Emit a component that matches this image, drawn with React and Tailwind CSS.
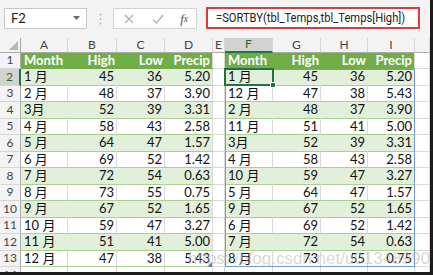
import React from "react";

const LEFT = [
  ["1 月", 45, 36, "5.20"],
  ["2 月", 48, 37, "3.90"],
  ["3月", 52, 39, "3.31"],
  ["4 月", 58, 43, "2.58"],
  ["5 月", 64, 47, "1.57"],
  ["6 月", 69, 52, "1.42"],
  ["7 月", 72, 54, "0.63"],
  ["8 月", 73, 55, "0.75"],
  ["9 月", 67, 52, "1.65"],
  ["10 月", 59, 47, "3.27"],
  ["11 月", 51, 41, "5.00"],
  ["12 月", 47, 38, "5.43"],
];
const RIGHT = [...LEFT].sort((a, b) => a[1] - b[1]);

const FONT = { fontFamily: "Lato, 'Noto Sans CJK SC', sans-serif" };

function ColHead({ label, sel }) {
  return (
    <div
      className={
        "flex items-center justify-center border-r border-[#d6d6d6] text-[12px] leading-none " +
        (sel
          ? "bg-[#d2d2d2] text-[#1e6b3c] border-b-2 border-b-[#217346]"
          : "bg-[#f3f3f3] text-[#444] border-b border-b-[#ababab]")
      }
    >
      {label}
    </div>
  );
}

function RowHead({ n, sel }) {
  return (
    <div
      className={
        "flex items-center justify-center border-b border-[#d6d6d6] text-[12px] leading-none " +
        (sel
          ? "bg-[#d2d2d2] text-[#1e6b3c] border-r-2 border-r-[#217346]"
          : "bg-[#f3f3f3] text-[#444] border-r border-r-[#ababab]")
      }
    >
      {n}
    </div>
  );
}

function Blank() {
  return <div className="bg-white border-r border-b border-[#d9d9d9]" />;
}

function HeaderCells() {
  return (
    <>
      <div className="bg-[#70ad47] border-b border-[#70ad47] flex items-center pl-[3px] text-white font-bold text-[13px]">Month</div>
      <div className="bg-[#70ad47] border-b border-[#70ad47] flex items-center justify-end pr-[2px] text-white font-bold text-[13px]">High</div>
      <div className="bg-[#70ad47] border-b border-[#70ad47] flex items-center justify-end pr-[2px] text-white font-bold text-[13px]">Low</div>
      <div className="bg-[#70ad47] border-b border-[#70ad47] border-r border-r-[#d9d9d9] flex items-center justify-end pr-[2px] text-white font-bold text-[13px]">Precip</div>
    </>
  );
}

function DataCells({ row, green }) {
  const bg = green ? "bg-[#e2efda] border-r-[#e2efda]" : "bg-white border-r-[#d9d9d9]";
  const base = "border-r border-b border-b-[#a9d08e] flex items-center text-[13px] text-[#111] ";
  return (
    <>
      <div className={base + bg + " pl-[3px]"}>{row[0]}</div>
      <div className={base + bg + " justify-end pr-[2px]"}>{row[1]}</div>
      <div className={base + bg + " justify-end pr-[2px]"}>{row[2]}</div>
      <div className={base + (green ? "bg-[#e2efda]" : "bg-white") + " border-r-[#d9d9d9] justify-end pr-[2px]"}>{row[3]}</div>
    </>
  );
}

export default function App() {
  const rows = [];
  rows.push(
    <React.Fragment key="r1">
      <RowHead n={1} />
      <HeaderCells />
      <Blank />
      <HeaderCells />
      <Blank />
    </React.Fragment>
  );
  for (let i = 0; i < 12; i++) {
    const green = i % 2 === 0;
    rows.push(
      <React.Fragment key={"r" + (i + 2)}>
        <RowHead n={i + 2} sel={i === 0} />
        <DataCells row={LEFT[i]} green={green} />
        <Blank />
        <DataCells row={RIGHT[i]} green={green} />
        <Blank />
      </React.Fragment>
    );
  }
  rows.push(
    <React.Fragment key="r14">
      <RowHead n={14} />
      <Blank /><Blank /><Blank /><Blank /><Blank /><Blank /><Blank /><Blank /><Blank /><Blank />
    </React.Fragment>
  );

  return (
    <div className="w-[433px] h-[275px] overflow-hidden bg-[#1c1c1c]" style={FONT}>
      <div className="w-[430px] h-[272px] overflow-hidden bg-white flex flex-col">
        {/* toolbar */}
        <div className="h-[38px] shrink-0 bg-[#f3f3f3] flex items-start pt-[8px] pl-[4px]">
          <div className="w-[83px] h-[21px] bg-white border border-[#c8c8c8] flex items-center justify-between pl-[6px] pr-[5px] text-[13px] text-[#222]">
            <span>F2</span>
            <svg width="8" height="5" viewBox="0 0 8 5"><path d="M0 0h7L3.5 4z" fill="#6b6b6b" /></svg>
          </div>
          <div className="w-[26px] h-[21px] flex items-center justify-center">
            <svg width="3" height="12" viewBox="0 0 3 12">
              <circle cx="1.5" cy="1.5" r="1" fill="#b5b5b5" />
              <circle cx="1.5" cy="6" r="1" fill="#b5b5b5" />
              <circle cx="1.5" cy="10.5" r="1" fill="#b5b5b5" />
            </svg>
          </div>
          <div className="w-[84px] h-[21px] bg-white border border-[#d4d4d4] flex items-center">
            <div className="w-[30px] flex justify-center">
              <svg width="10" height="10" viewBox="0 0 10 10"><path d="M1 1l8 8M9 1l-8 8" stroke="#b0b0b0" strokeWidth="1.2" /></svg>
            </div>
            <div className="w-[30px] flex justify-center">
              <svg width="12" height="10" viewBox="0 0 12 10"><path d="M1 5.5l3.5 3.5L11 1" stroke="#b0b0b0" strokeWidth="1.3" fill="none" /></svg>
            </div>
            <div className="w-[24px] flex justify-center text-[#555] text-[13px] italic" style={{ fontFamily: "'Liberation Serif', serif" }}>
              f<span className="text-[10px] relative top-[2px]">x</span>
            </div>
          </div>
          <div className="ml-[9px] w-[214px] h-[22px] -mt-[1px] bg-white border-2 border-[#e2393b] flex items-center pl-[8px] text-[13px] text-[#222] whitespace-nowrap overflow-hidden" style={{ fontFamily: "Roboto, sans-serif" }}>
            <span className="inline-block origin-left scale-x-[0.86]">=SORTBY(tbl_Temps,tbl_Temps[High])</span>
          </div>
        </div>
        {/* sheet */}
        <div className="relative">
          <div className="grid grid-cols-[21px_47px_49px_48px_48px_12px_48px_48px_47px_47px_1fr] grid-rows-[14.5px_repeat(14,16.5px)]">
            <div className="bg-[#f3f3f3] border-r border-b border-r-[#ababab] border-b-[#ababab] relative">
              <svg className="absolute right-[2px] bottom-[2px]" width="9" height="9" viewBox="0 0 9 9"><path d="M9 0V9H0z" fill="#b7b7b7" /></svg>
            </div>
            <ColHead label="A" />
            <ColHead label="B" />
            <ColHead label="C" />
            <ColHead label="D" />
            <ColHead label="E" />
            <ColHead label="F" sel />
            <ColHead label="G" />
            <ColHead label="H" />
            <ColHead label="I" />
            <ColHead label="" />
            {rows}
          </div>
          {/* spill range border */}
          <div className="absolute left-[225px] top-[30.5px] w-[190px] h-[198.5px] border border-[#6f9ad6] pointer-events-none" />
          {/* active cell */}
          <div className="absolute left-[224px] top-[30px] w-[50px] h-[17.5px] border-2 border-[#217346] pointer-events-none">
            <div className="absolute -right-[4px] -bottom-[4px] w-[6px] h-[6px] bg-[#217346] border border-white" />
          </div>
          {/* table resize handle */}
          <svg className="absolute left-[207px] top-[224px]" width="5" height="5" viewBox="0 0 5 5"><path d="M5 0V5H0z" fill="#4a7cc4" /></svg>
          {/* watermark */}
          <div className="absolute left-[188px] top-[208px] text-[17px] text-[rgba(175,175,175,0.5)] whitespace-nowrap pointer-events-none" style={{ fontFamily: "'Liberation Sans', sans-serif" }}>
            https://blog.csdn.net/u013489903
          </div>
        </div>
      </div>
    </div>
  );
}
